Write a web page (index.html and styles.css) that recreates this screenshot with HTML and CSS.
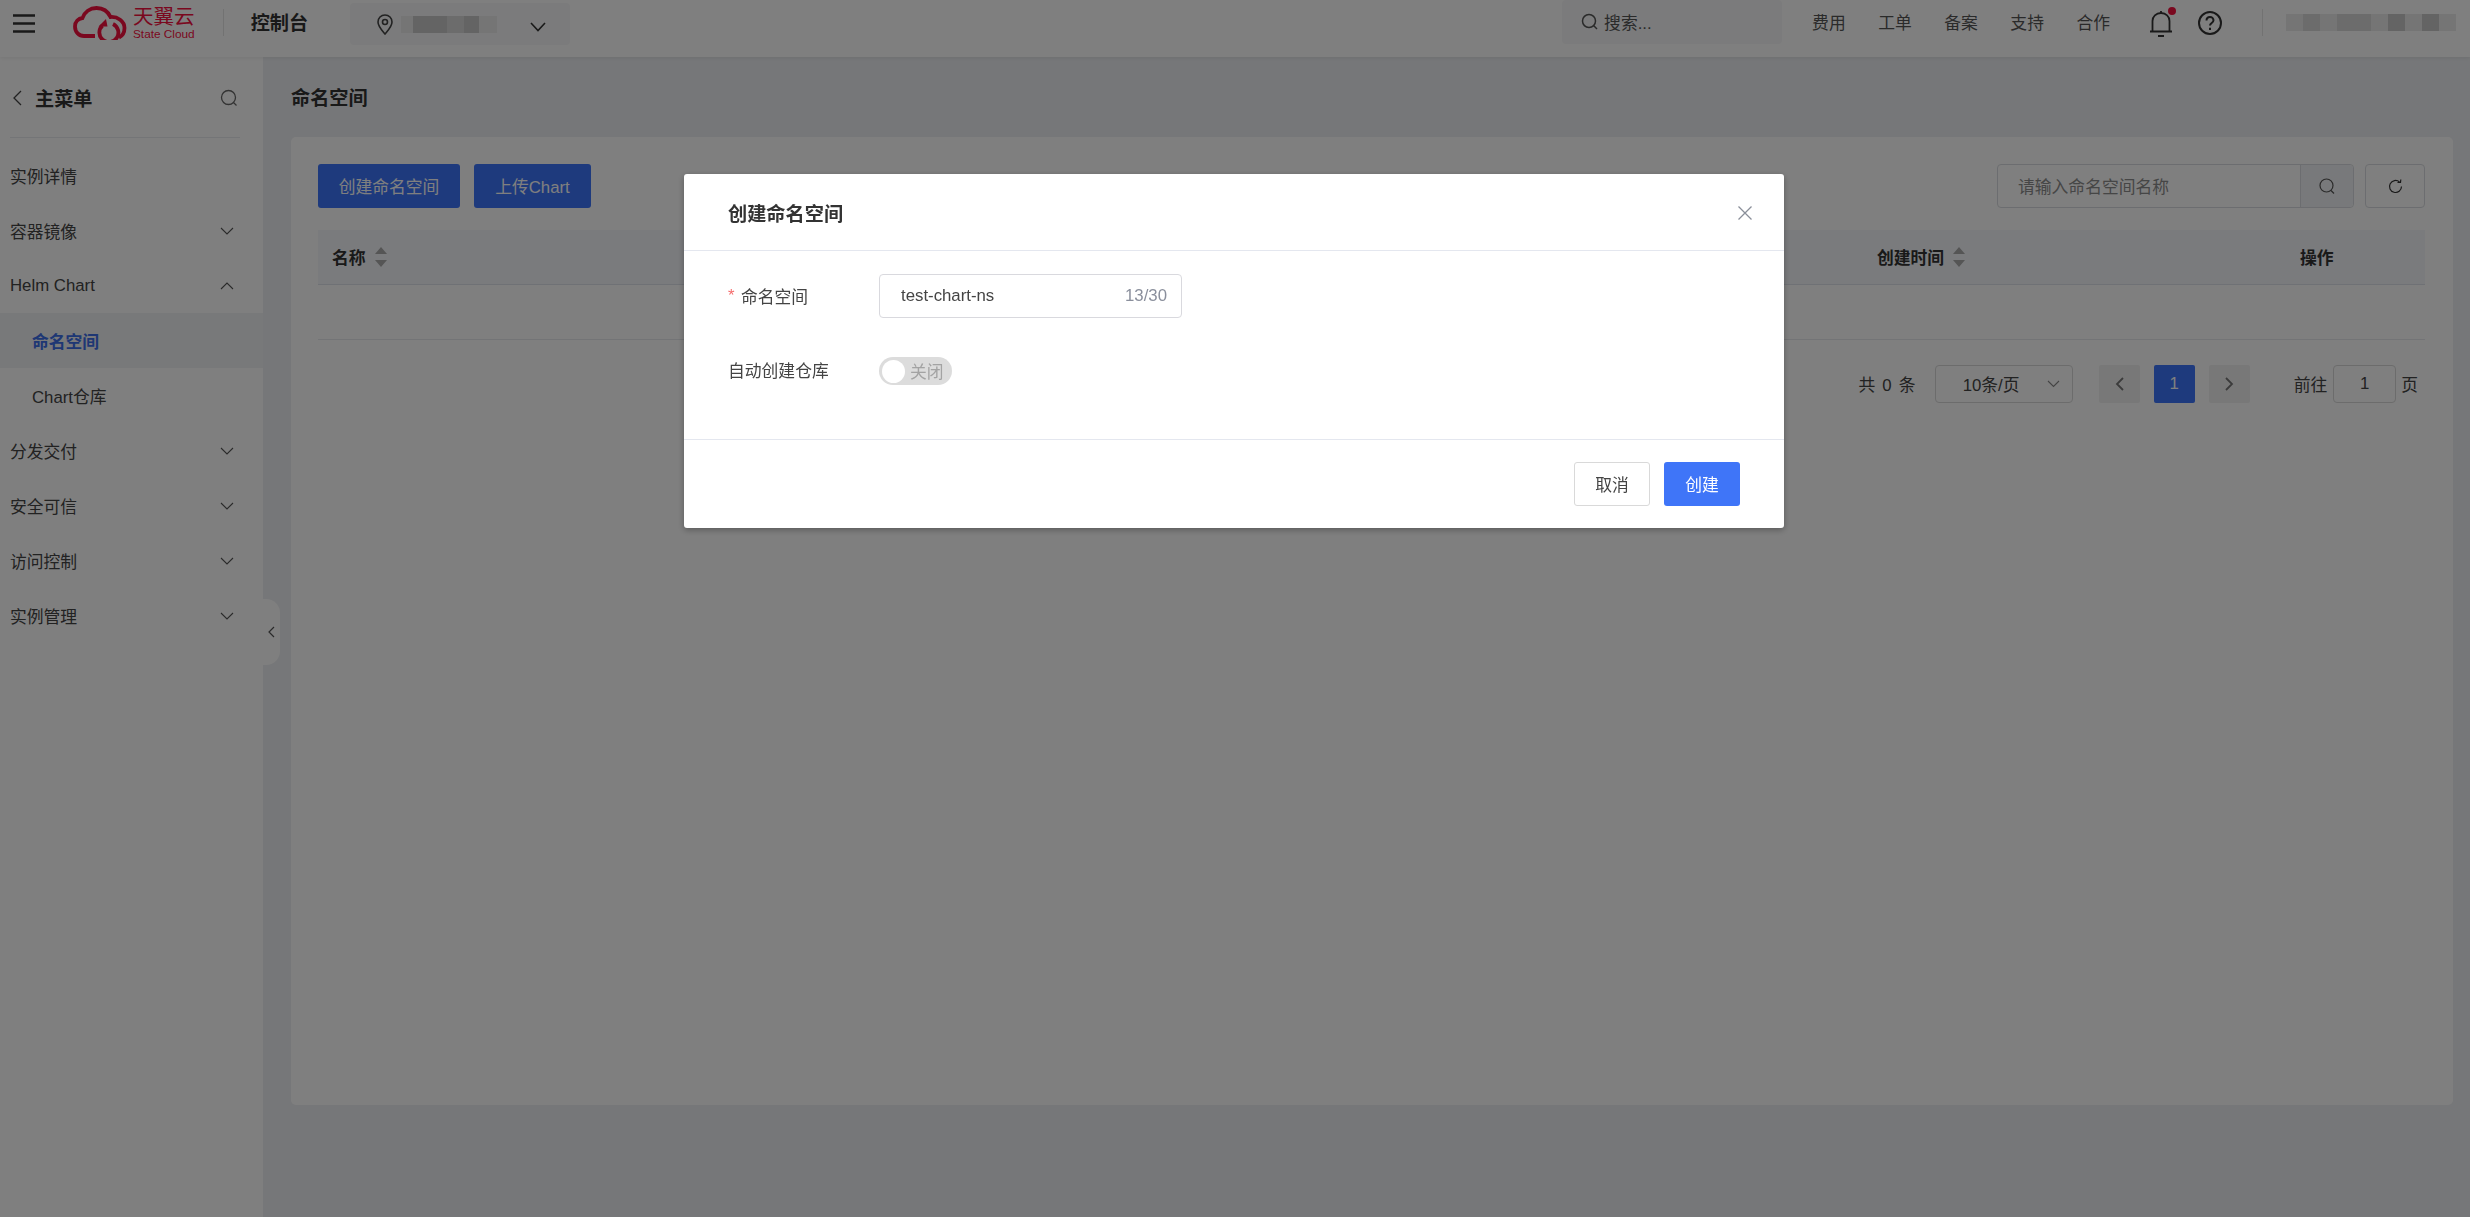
FILE: index.html
```html
<!DOCTYPE html>
<html lang="zh-CN">
<head>
<meta charset="utf-8">
<title>命名空间</title>
<link rel="stylesheet" href="styles.css">
</head>
<body>
<div class="app">
  <header class="topbar">
    <svg class="burger" width="22" height="19" viewBox="0 0 22 19"><path d="M0 1.500h22M0 9.500h22M0 17.500h22" stroke="#333" stroke-width="2.400" fill="none"/></svg>
    <div class="logo">
      <svg class="cloud" width="54" height="34" viewBox="0 0 54 34" fill="none" stroke="#f5103f" stroke-width="3.800"><path d="M22 30H11C6 30 2 26 2 20.500 2 15.500 5.500 12.500 9.500 12 11.500 6 17 2 23.500 2c6.500 0 11.500 3.500 14 9 7-.5 14 4 14 11 0 5-2.500 8-5.500 9.500"/><path d="M29.500 19.500a9.500 9.500 0 1 0 10.500-1.500"/><path d="M33 13l-7.500 7.500h9z" fill="#f5103f" stroke="none"/></svg>
      <div class="logo-text"><span class="logo-cn">天翼云</span><span class="logo-en">State Cloud</span></div>
    </div>
    <span class="vline first"></span>
    <span class="console">控制台</span>
    <div class="region">
      <svg width="16" height="21" viewBox="0 0 16 21" fill="none" stroke="#444" stroke-width="1.600"><path d="M8 1C4 1 1 4 1 8c0 4.500 4.500 9 7 12 2.500-3 7-7.500 7-12 0-4-3-7-7-7z"/><circle cx="8" cy="8" r="2.500"/></svg>
      <div class="mosaic region-mosaic"><i class="t1 w12"></i><i class="t3 w17"></i><i class="t3 w17"></i><i class="t2 w17"></i><i class="t3 w15"></i><i class="t1 w18"></i></div>
      <svg class="region-chev" width="16" height="10" viewBox="0 0 16 10" fill="none" stroke="#333" stroke-width="1.600"><path d="M1 1l7 7.500L15 1"/></svg>
    </div>
    <div class="top-search">
      <svg width="18" height="18" viewBox="0 0 18 18" fill="none" stroke="#555" stroke-width="1.500"><circle cx="8" cy="8" r="6.500"/><path d="M12.800 12.800L16 16"/></svg>
      <span>搜索...</span>
    </div>
    <nav class="top-nav"><a>费用</a><a>工单</a><a>备案</a><a>支持</a><a>合作</a></nav>
    <div class="bell">
      <svg width="24" height="27" viewBox="0 0 24 27" fill="none" stroke="#333" stroke-width="1.800"><path d="M3.500 21V11c0-4.500 3.500-8 8.500-8s8.500 3.500 8.500 8v10M1 21.500h22M9 26h6M12 1v2"/></svg>
      <span class="dot"></span>
    </div>
    <svg class="help" width="24" height="24" viewBox="0 0 24 24" fill="none" stroke="#333" stroke-width="2"><circle cx="12" cy="12" r="11"/><path d="M8.500 9.500c0-2 1.500-3.500 3.500-3.500s3.500 1.500 3.500 3.300c0 2.700-3.500 2.700-3.500 5.200M12 16.800v2.200"/></svg>
    <span class="vline second"></span>
    <div class="mosaic user-mosaic"><i class="t1 w17"></i><i class="t2 w17"></i><i class="t1 w17"></i><i class="t2 w17"></i><i class="t2 w17"></i><i class="t1 w17"></i><i class="t3 w17"></i><i class="t1 w17"></i><i class="t3 w17"></i><i class="t1 w17"></i></div>
  </header>
  <div class="body">
    <aside class="sidebar">
      <div class="side-head">
        <svg width="9" height="16" viewBox="0 0 9 16" fill="none" stroke="#444" stroke-width="1.300"><path d="M8 1L1 8l7 7"/></svg>
        <strong>主菜单</strong>
        <svg class="side-search" width="18" height="18" viewBox="0 0 18 18" fill="none" stroke="#666" stroke-width="1.300"><circle cx="8.500" cy="8.500" r="7"/><path d="M13.500 13.500L16.500 16.500"/></svg>
      </div>
      <ul class="menu">
        <li>实例详情</li>
        <li>容器镜像<svg class="chev" width="14" height="8" viewBox="0 0 14 8" fill="none" stroke="#555" stroke-width="1.100"><path d="M1 1l6 6 6-6"/></svg></li>
        <li>Helm Chart<svg class="chev" width="14" height="8" viewBox="0 0 14 8" fill="none" stroke="#555" stroke-width="1.100"><path d="M1 7l6-6 6 6"/></svg></li>
        <li class="child active">命名空间</li>
        <li class="child">Chart仓库</li>
        <li>分发交付<svg class="chev" width="14" height="8" viewBox="0 0 14 8" fill="none" stroke="#555" stroke-width="1.100"><path d="M1 1l6 6 6-6"/></svg></li>
        <li>安全可信<svg class="chev" width="14" height="8" viewBox="0 0 14 8" fill="none" stroke="#555" stroke-width="1.100"><path d="M1 1l6 6 6-6"/></svg></li>
        <li>访问控制<svg class="chev" width="14" height="8" viewBox="0 0 14 8" fill="none" stroke="#555" stroke-width="1.100"><path d="M1 1l6 6 6-6"/></svg></li>
        <li>实例管理<svg class="chev" width="14" height="8" viewBox="0 0 14 8" fill="none" stroke="#555" stroke-width="1.100"><path d="M1 1l6 6 6-6"/></svg></li>
      </ul>
      <div class="collapse"><svg width="7" height="12" viewBox="0 0 7 12" fill="none" stroke="#555" stroke-width="1.200"><path d="M6 1L1 6l5 5"/></svg></div>
    </aside>
    <main class="main">
      <h1 class="page-title">命名空间</h1>
      <section class="card">
        <div class="toolbar">
          <button class="btn primary wide">创建命名空间</button>
          <button class="btn primary">上传Chart</button>
          <div class="search">
            <span class="search-ph">请输入命名空间名称</span>
            <span class="search-btn"><svg width="16" height="17" viewBox="0 0 16 17" fill="none" stroke="#555" stroke-width="1.200"><circle cx="7.500" cy="7.500" r="6.500"/><path d="M12 12.500l3 3"/></svg></span>
          </div>
          <span class="refresh"><svg width="15" height="15" viewBox="0 0 15 15" fill="none" stroke="#333" stroke-width="1.200"><path d="M13.500 7.500a6 6 0 1 1-2-4.500"/><path d="M9.500 3.500l3 0 .3-3"/></svg></span>
        </div>
        <div class="thead">
          <div class="th first-th">名称<svg class="sort" width="12" height="20" viewBox="0 0 12 20"><path d="M6 0l6 7H0zM6 20L0 13h12z" fill="#aaa"/></svg></div>
          <div class="th">创建时间<svg class="sort" width="12" height="20" viewBox="0 0 12 20"><path d="M6 0l6 7H0zM6 20L0 13h12z" fill="#aaa"/></svg></div>
          <div class="th">操作</div>
        </div>
        <div class="tempty"></div>
        <div class="pager">
          <span class="total">共 0 条</span>
          <div class="size">10条/页<svg width="13" height="8" viewBox="0 0 13 8" fill="none" stroke="#888" stroke-width="1.100"><path d="M1 1l5.500 5.500L12 1"/></svg></div>
          <span class="pg prev"><svg width="9" height="14" viewBox="0 0 9 14" fill="none" stroke="#777" stroke-width="1.800"><path d="M8 1L2 7l6 6"/></svg></span>
          <span class="pg on">1</span>
          <span class="pg next"><svg width="9" height="14" viewBox="0 0 9 14" fill="none" stroke="#777" stroke-width="1.800"><path d="M1 1l6 6-6 6"/></svg></span>
          <span class="goto">前往</span>
          <span class="goto-box">1</span>
          <span>页</span>
        </div>
      </section>
    </main>
  </div>
</div>
<div class="overlay">
  <div class="modal">
    <div class="modal-head">
      <strong>创建命名空间</strong>
      <svg width="14" height="14" viewBox="0 0 14 14" fill="none" stroke="#8a8f99" stroke-width="1.300"><path d="M.5.500l13 13M13.500.500l-13 13"/></svg>
    </div>
    <div class="modal-body">
      <div class="form-row">
        <label class="form-label"><span class="req">*</span>命名空间</label>
        <div class="field"><span>test-chart-ns</span><span class="count">13/30</span></div>
      </div>
      <div class="form-row switch-row">
        <label class="form-label">自动创建仓库</label>
        <div class="switch"><span class="knob"></span><span>关闭</span></div>
      </div>
    </div>
    <div class="modal-foot">
      <button class="btn plain">取消</button>
      <button class="btn create">创建</button>
    </div>
  </div>
</div>
</body>
</html>
```
FILE: styles.css
```css
* { box-sizing: border-box; }
html, body { margin: 0; height: 100%; overflow: hidden; }
body {
  font-family: "Liberation Sans", "Noto Sans CJK SC", sans-serif;
  font-size: 16.8px;
  color: #444;
  background: #edeff2;
}
ul { margin: 0; padding: 0; list-style: none; }
h1 { margin: 0; }
button { font: inherit; cursor: pointer; }

.app { height: 100vh; display: flex; flex-direction: column; }

/* top bar */
.topbar {
  height: 57px;
  flex: none;
  display: flex;
  align-items: center;
  padding-left: 13px;
  background: #fff;
  box-shadow: 0 1px 4px rgba(0,0,0,.08);
  position: relative;
  z-index: 2;
}
.burger { margin-bottom: 10px; }
.logo { display: flex; align-items: flex-start; margin: 0 0 11px 38px; gap: 6px; }
.logo-text { display: flex; flex-direction: column; }
.logo-cn { font-size: 20.5px; line-height: 22px; color: #f5103f; }
.logo-en { font-size: 11.8px; line-height: 12px; color: #f5103f; }
.vline { width: 1px; height: 27px; background: #e5e5e5; margin-bottom: 12px; }
.vline.first { margin-left: 28px; }
.vline.second { margin-left: 40px; }
.console { margin: 0 0 14px 27px; font-size: 19.2px; font-weight: 700; color: #333; }
.region {
  width: 220px;
  height: 42px;
  margin: 0 0 9px 42px;
  padding-left: 27px;
  display: flex;
  align-items: center;
  background: #f6f7f8;
  border-radius: 4px;
}
.mosaic { display: flex; height: 17px; }
.mosaic i { display: block; height: 100%; }
.t1 { background: #ebebeb; }
.t2 { background: #d9d9d9; }
.t3 { background: #c8c8c8; }
.w12 { width: 12px; } .w15 { width: 15px; } .w17 { width: 17px; } .w18 { width: 18px; }
.region-mosaic { margin-left: 8px; }
.region-chev { margin: 6px 0 0 33px; }
.top-search {
  width: 220px;
  height: 44px;
  margin: 0 0 13px auto;
  padding-left: 19px;
  display: flex;
  align-items: center;
  gap: 5px;
  background: #f6f7f8;
  border-radius: 4px;
  color: #555;
}
.top-nav { display: flex; gap: 32.5px; margin: 0 0 13px 30px; color: #555; }
.bell { position: relative; width: 24px; height: 27px; margin: 0 0 11px 39px; }
.bell svg { display: block; }
.dot { position: absolute; top: -3px; right: -3px; width: 8px; height: 8px; border-radius: 50%; background: #f5103f; }
.help { margin: 0 0 12px 25px; }
.user-mosaic { margin: 0 14px 12px 23px; }

/* shell */
.body { flex: 1; display: flex; min-height: 0; }
.sidebar { width: 263px; flex: none; background: #fff; position: relative; }
.side-head {
  height: 81px;
  margin: 0 23px 0 10px;
  padding: 2px 2px 0 3px;
  display: flex;
  align-items: center;
  border-bottom: 1px solid #e8eaee;
}
.side-head strong { margin-left: 13px; font-size: 19.2px; color: #333; }
.side-search { margin-left: auto; }
.menu { padding-top: 10px; }
.menu li {
  height: 55px;
  padding: 0 29px 0 10px;
  display: flex;
  align-items: center;
  justify-content: space-between;
}
.menu .child { padding-left: 32px; }
.menu .active { background: #f0f2f5; color: #3c6ee8; font-weight: 700; }
.collapse {
  position: absolute;
  left: 263px;
  top: 542px;
  width: 17px;
  height: 66px;
  display: flex;
  align-items: center;
  justify-content: center;
  background: #fff;
  border-radius: 0 14px 14px 0;
}

/* main */
.main { flex: 1; min-width: 0; padding: 0 17px 0 28px; }
.page-title { height: 80px; line-height: 84px; font-size: 19.2px; font-weight: 700; color: #333; }
.card { height: 968px; padding: 27px 28px 0 27px; background: #fff; border-radius: 5px; }
.toolbar { height: 44px; display: flex; align-items: center; gap: 14px; }
.btn { height: 44px; width: 76px; padding: 0; border-radius: 3px; border: 1px solid transparent; font-size: 16.8px; }
.btn.primary { width: 117px; background: #3c74fa; color: #fff; }
.btn.primary.wide { width: 142px; }
.search {
  width: 357px;
  height: 44px;
  margin-left: auto;
  display: flex;
  align-items: center;
  border: 1px solid #d8dbe0;
  border-radius: 4px;
  color: #8c8c8c;
}
.search-ph { flex: 1; padding-left: 20px; }
.search-btn {
  width: 53px;
  height: 100%;
  display: flex;
  align-items: center;
  justify-content: center;
  background: #f1f3f6;
  border-left: 1px solid #d8dbe0;
  border-radius: 0 4px 4px 0;
}
.refresh {
  width: 60px;
  height: 44px;
  margin-left: -3px;
  display: flex;
  align-items: center;
  justify-content: center;
  border: 1px solid #d8dbe0;
  border-radius: 4px;
}
.thead {
  margin-top: 22px;
  height: 55px;
  display: grid;
  grid-template-columns: 1559px 423px 1fr;
  align-items: center;
  background: #f4f6fa;
  border-bottom: 1px solid #dfe3ea;
}
.th { display: flex; align-items: center; font-weight: 700; color: #333; }
.first-th { padding-left: 14px; }
.sort { margin-left: 9px; }
.tempty { height: 55px; border-bottom: 1px solid #e6e8ec; }
.pager { margin-top: 25px; padding-right: 7px; height: 38px; display: flex; align-items: center; justify-content: flex-end; }
.total { word-spacing: 2.5px; }
.size {
  width: 138px;
  height: 38px;
  margin-left: 19px;
  padding: 0 12px 0 27px;
  display: flex;
  align-items: center;
  justify-content: space-between;
  border: 1px solid #d8d8d8;
  border-radius: 4px;
}
.pg {
  width: 41px;
  height: 38px;
  margin-left: 14px;
  display: flex;
  align-items: center;
  justify-content: center;
  background: #f0f0f0;
  border-radius: 2px;
}
.pg.prev { margin-left: 26px; }
.pg.on { background: #3c74fa; color: #fff; }
.goto { margin-left: 44px; }
.goto-box {
  width: 63px;
  height: 38px;
  margin: 0 5px 0 6px;
  display: flex;
  align-items: center;
  justify-content: center;
  border: 1px solid #d8d8d8;
  border-radius: 4px;
}

/* dialog */
.overlay {
  position: fixed;
  inset: 0;
  z-index: 10;
  padding: 174px 0 0 684px;
  background: rgba(0,0,0,.5);
}
.modal {
  width: 1100px;
  height: 354px;
  display: flex;
  flex-direction: column;
  background: #fff;
  border-radius: 3px;
  box-shadow: 0 2px 6px rgba(0,0,0,.3);
}
.modal-head {
  height: 77px;
  flex: none;
  padding: 2px 32px 0 44px;
  display: flex;
  align-items: center;
  justify-content: space-between;
  border-bottom: 1px solid #e4e7ef;
}
.modal-head strong { font-size: 19.2px; color: #333; }
.modal-body { height: 189px; flex: none; padding: 23px 0 0 44px; border-bottom: 1px solid #e4e7ef; }
.form-row { display: flex; align-items: center; }
.switch-row { margin-top: 39px; }
.switch-row .form-label { padding-bottom: 3px; }
.form-label { width: 151px; flex: none; display: flex; align-items: center; }
.req { width: 13px; color: #f56c6c; }
.field {
  width: 303px;
  height: 44px;
  padding: 0 14px 0 21px;
  display: flex;
  align-items: center;
  justify-content: space-between;
  border: 1px solid #d9d9de;
  border-radius: 4px;
}
.count { color: #8a8f9c; }
.switch {
  width: 73px;
  height: 28px;
  padding-left: 3px;
  display: flex;
  align-items: center;
  gap: 5px;
  background: #dcdcdc;
  border-radius: 14px;
  color: #a3a3a3;
}
.knob { width: 23px; height: 23px; border-radius: 50%; background: #fff; }
.modal-foot { flex: 1; padding: 22px 44px 0 0; display: flex; justify-content: flex-end; gap: 14px; }
.btn.plain { background: #fff; border-color: #d9d9d9; color: #444; }
.btn.create { background: #3f75f8; color: #fff; }
```
